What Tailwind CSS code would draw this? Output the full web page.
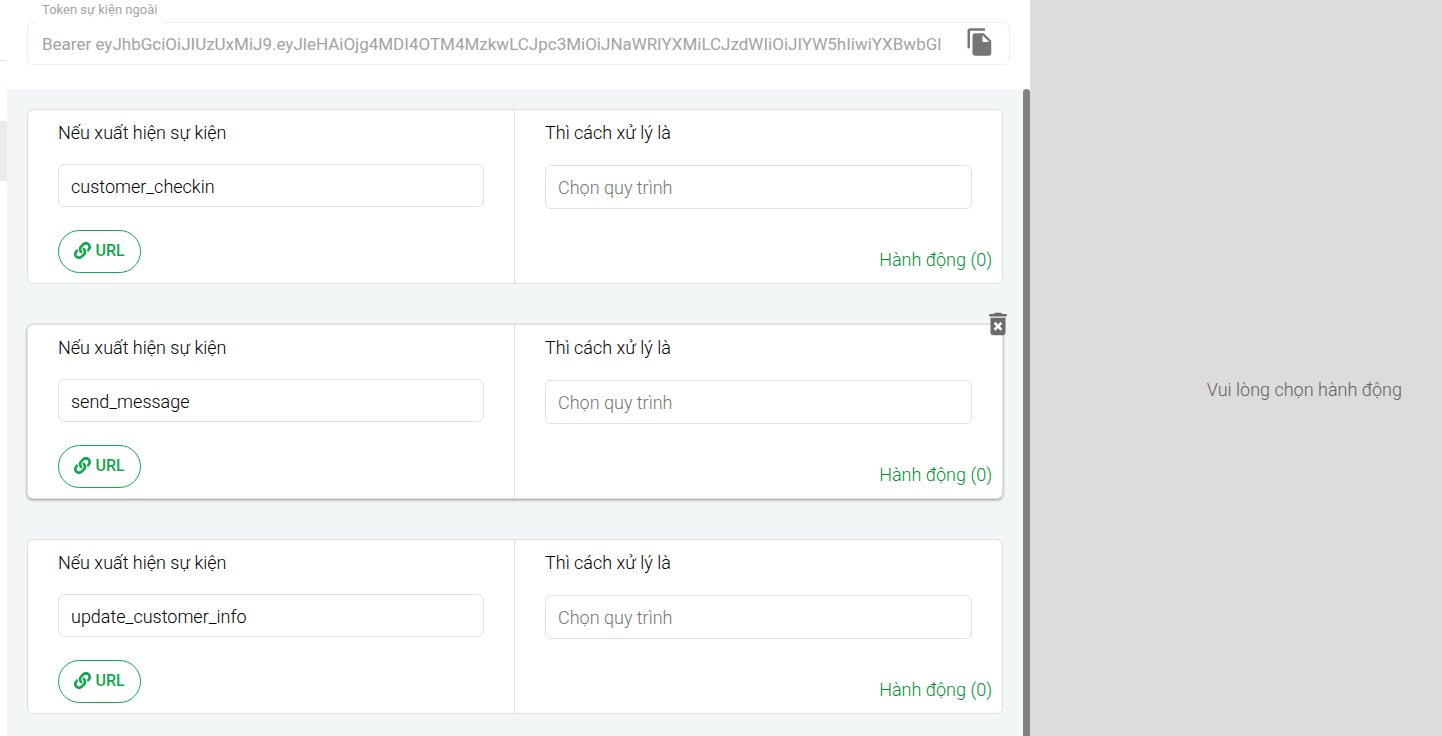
<!DOCTYPE html>
<html lang="vi">
<head>
    <meta charset="UTF-8">
    <meta name="viewport" content="width=device-width, initial-scale=1.0">
    <title>Sự kiện ngoài</title>
    <script src="https://cdn.jsdelivr.net/npm/@tailwindcss/browser@4"></script>
</head>
<body class="bg-white font-[Roboto,sans-serif] text-lg font-light text-black">

    <div class="flex h-screen overflow-hidden">

        <!-- Edge of the navigation -->
        <div class="w-[7px] shrink-0">
            <div class="h-[61px] border-b border-[#e0e0e0]"></div>
            <div class="mt-[60px] h-[60px] bg-[#e9eaec]"></div>
        </div>

        <!-- Main -->
        <main class="flex min-w-0 flex-1 flex-col">
            <div class="px-5 pt-[22px] pb-6">
                <div class="relative flex h-[43px] items-center rounded-md border border-[#eeeeee] pr-[14px] pl-[14px]">
                    <label for="token" class="absolute bottom-[38px] left-2 bg-white px-[6px] text-[13px] leading-8 font-normal text-[#a3a3a3]">Token sự kiện ngoài</label>
                    <input id="token" type="text" readonly class="min-w-0 flex-1 pt-[2px] text-[17px] font-normal text-[#a3a3a3] outline-none" value="Bearer eyJhbGciOiJIUzUxMiJ9.eyJleHAiOjg4MDI4OTM4MzkwLCJpc3MiOiJNaWRlYXMiLCJzdWIiOiJIYW5hIiwiYXBwbGl">
                    <button type="button" aria-label="Sao chép" class="mb-1">
                        <svg class="size-[30px]" viewBox="0 0 24 24" fill="#757575"><path d="M16 1H4c-1.100 0-2 .9-2 2v14h2V3h12V1zm-1 4l6 6v10c0 1.100-.9 2-2 2H7.990C6.890 23 6 22.100 6 21l.010-14c0-1.100.890-2 1.990-2h7zm-1 7h5.500L14 6.500V12z"/></svg>
                    </button>
                </div>
            </div>

            <div class="flex min-h-0 flex-1 bg-[#f3f6f7]">
                <div class="flex min-w-0 flex-1 flex-col gap-10 p-5">

                    <section class="grid h-[175px] shrink-0 grid-cols-2 rounded-md border border-[#e0e0e0] bg-white">
                        <div class="border-r border-[#e0e0e0] px-[30px] pt-[9px]">
                            <label for="event-1" class="block leading-7">Nếu xuất hiện sự kiện</label>
                            <input id="event-1" type="text" value="customer_checkin" class="mt-[17px] block h-[43px] w-full rounded-md border border-[#e0e0e0] px-3 pt-[2px] outline-none">
                            <button type="button" class="mt-[23px] flex h-[43px] w-[83px] items-center justify-center gap-1 rounded-full border border-[#0fa84b] pb-[2px] text-base font-medium text-[#0fa84b]">
                                <svg class="size-[17px]" viewBox="0 0 512 512" fill="currentColor"><path d="M326.612 185.391c59.747 59.809 58.927 155.698.36 214.590-.11.120-.240.250-.360.370l-67.200 67.200c-59.270 59.270-155.699 59.262-214.960 0-59.270-59.260-59.270-155.700 0-214.960l37.106-37.106c9.840-9.840 26.786-3.300 27.294 10.606.648 17.722 3.826 35.527 9.690 52.721 1.986 5.822.567 12.262-3.783 16.612l-13.087 13.087c-28.026 28.026-28.905 73.660-1.155 101.960 28.024 28.579 74.086 28.749 102.325.510l67.200-67.190c28.191-28.191 28.073-73.757 0-101.830-3.701-3.694-7.429-6.564-10.341-8.569a16.037 16.037 0 0 1-6.947-12.606c-.396-10.567 3.348-21.456 11.698-29.806l21.054-21.055c5.521-5.521 14.182-6.199 20.584-1.731a152.482 152.482 0 0 1 20.522 17.197zM467.547 44.449c-59.261-59.262-155.690-59.270-214.960 0l-67.200 67.200c-.120.120-.250.250-.360.370-58.566 58.892-59.387 154.781.360 214.590a152.454 152.454 0 0 0 20.521 17.196c6.402 4.468 15.064 3.789 20.584-1.731l21.054-21.055c8.350-8.350 12.094-19.239 11.698-29.806a16.037 16.037 0 0 0-6.947-12.606c-2.912-2.005-6.640-4.875-10.341-8.569-28.073-28.073-28.191-73.639 0-101.830l67.200-67.190c28.239-28.239 74.300-28.069 102.325.510 27.750 28.300 26.872 73.934-1.155 101.960l-13.087 13.087c-4.350 4.350-5.769 10.790-3.783 16.612 5.864 17.194 9.042 34.999 9.690 52.721.509 13.906 17.454 20.446 27.294 10.606l37.106-37.106c59.271-59.259 59.271-155.699.001-214.959z"/></svg>
                                URL
                            </button>
                        </div>
                        <div class="px-[30px] pt-[9px]">
                            <label for="flow-1" class="block leading-7">Thì cách xử lý là</label>
                            <input id="flow-1" type="text" placeholder="Chọn quy trình" class="mt-[18px] block h-11 w-full rounded-md border border-[#e0e0e0] px-3 pt-px outline-none placeholder:text-[#757575]">
                            <button type="button" class="-mr-5 mt-[37px] ml-auto block leading-7 text-[#008f35]">Hành động (0)</button>
                        </div>
                    </section>

                    <section class="relative grid h-[175px] shrink-0 grid-cols-2 rounded-md border border-[#e0e0e0] bg-white shadow-[0_1px_3px_#00000066]">
                        <button type="button" aria-label="Xóa" class="absolute -top-4 -right-[11px]">
                            <svg class="size-[30px]" viewBox="0 0 24 24" fill="#6b6b6b"><path d="M6 19c0 1.100.9 2 2 2h8c1.100 0 2-.9 2-2V7H6v12z"/><path d="M15.500 4l-1-1h-5l-1 1H5v2h14V4z"/><path d="M9.200 11l5.600 5.600M14.800 11l-5.600 5.600" stroke="#fff" stroke-width="2"/></svg>
                        </button>
                        <div class="border-r border-[#e0e0e0] px-[30px] pt-[9px]">
                            <label for="event-2" class="block leading-7">Nếu xuất hiện sự kiện</label>
                            <input id="event-2" type="text" value="send_message" class="mt-[17px] block h-[43px] w-full rounded-md border border-[#e0e0e0] px-3 pt-[2px] outline-none">
                            <button type="button" class="mt-[23px] flex h-[43px] w-[83px] items-center justify-center gap-1 rounded-full border border-[#0fa84b] pb-[2px] text-base font-medium text-[#0fa84b]">
                                <svg class="size-[17px]" viewBox="0 0 512 512" fill="currentColor"><path d="M326.612 185.391c59.747 59.809 58.927 155.698.36 214.590-.11.120-.240.250-.360.370l-67.200 67.200c-59.270 59.270-155.699 59.262-214.960 0-59.270-59.260-59.270-155.700 0-214.960l37.106-37.106c9.840-9.840 26.786-3.300 27.294 10.606.648 17.722 3.826 35.527 9.690 52.721 1.986 5.822.567 12.262-3.783 16.612l-13.087 13.087c-28.026 28.026-28.905 73.660-1.155 101.960 28.024 28.579 74.086 28.749 102.325.510l67.200-67.190c28.191-28.191 28.073-73.757 0-101.830-3.701-3.694-7.429-6.564-10.341-8.569a16.037 16.037 0 0 1-6.947-12.606c-.396-10.567 3.348-21.456 11.698-29.806l21.054-21.055c5.521-5.521 14.182-6.199 20.584-1.731a152.482 152.482 0 0 1 20.522 17.197zM467.547 44.449c-59.261-59.262-155.690-59.270-214.960 0l-67.200 67.200c-.120.120-.250.250-.360.370-58.566 58.892-59.387 154.781.360 214.590a152.454 152.454 0 0 0 20.521 17.196c6.402 4.468 15.064 3.789 20.584-1.731l21.054-21.055c8.350-8.350 12.094-19.239 11.698-29.806a16.037 16.037 0 0 0-6.947-12.606c-2.912-2.005-6.640-4.875-10.341-8.569-28.073-28.073-28.191-73.639 0-101.830l67.200-67.190c28.239-28.239 74.300-28.069 102.325.510 27.750 28.300 26.872 73.934-1.155 101.960l-13.087 13.087c-4.350 4.350-5.769 10.790-3.783 16.612 5.864 17.194 9.042 34.999 9.690 52.721.509 13.906 17.454 20.446 27.294 10.606l37.106-37.106c59.271-59.259 59.271-155.699.001-214.959z"/></svg>
                                URL
                            </button>
                        </div>
                        <div class="px-[30px] pt-[9px]">
                            <label for="flow-2" class="block leading-7">Thì cách xử lý là</label>
                            <input id="flow-2" type="text" placeholder="Chọn quy trình" class="mt-[18px] block h-11 w-full rounded-md border border-[#e0e0e0] px-3 pt-px outline-none placeholder:text-[#757575]">
                            <button type="button" class="-mr-5 mt-[37px] ml-auto block leading-7 text-[#008f35]">Hành động (0)</button>
                        </div>
                    </section>

                    <section class="grid h-[175px] shrink-0 grid-cols-2 rounded-md border border-[#e0e0e0] bg-white">
                        <div class="border-r border-[#e0e0e0] px-[30px] pt-[9px]">
                            <label for="event-3" class="block leading-7">Nếu xuất hiện sự kiện</label>
                            <input id="event-3" type="text" value="update_customer_info" class="mt-[17px] block h-[43px] w-full rounded-md border border-[#e0e0e0] px-3 pt-[2px] outline-none">
                            <button type="button" class="mt-[23px] flex h-[43px] w-[83px] items-center justify-center gap-1 rounded-full border border-[#0fa84b] pb-[2px] text-base font-medium text-[#0fa84b]">
                                <svg class="size-[17px]" viewBox="0 0 512 512" fill="currentColor"><path d="M326.612 185.391c59.747 59.809 58.927 155.698.36 214.590-.11.120-.240.250-.360.370l-67.200 67.200c-59.270 59.270-155.699 59.262-214.960 0-59.270-59.260-59.270-155.700 0-214.960l37.106-37.106c9.840-9.840 26.786-3.300 27.294 10.606.648 17.722 3.826 35.527 9.690 52.721 1.986 5.822.567 12.262-3.783 16.612l-13.087 13.087c-28.026 28.026-28.905 73.660-1.155 101.960 28.024 28.579 74.086 28.749 102.325.510l67.200-67.190c28.191-28.191 28.073-73.757 0-101.830-3.701-3.694-7.429-6.564-10.341-8.569a16.037 16.037 0 0 1-6.947-12.606c-.396-10.567 3.348-21.456 11.698-29.806l21.054-21.055c5.521-5.521 14.182-6.199 20.584-1.731a152.482 152.482 0 0 1 20.522 17.197zM467.547 44.449c-59.261-59.262-155.690-59.270-214.960 0l-67.200 67.200c-.120.120-.250.250-.360.370-58.566 58.892-59.387 154.781.360 214.590a152.454 152.454 0 0 0 20.521 17.196c6.402 4.468 15.064 3.789 20.584-1.731l21.054-21.055c8.350-8.350 12.094-19.239 11.698-29.806a16.037 16.037 0 0 0-6.947-12.606c-2.912-2.005-6.640-4.875-10.341-8.569-28.073-28.073-28.191-73.639 0-101.830l67.200-67.190c28.239-28.239 74.300-28.069 102.325.510 27.750 28.300 26.872 73.934-1.155 101.960l-13.087 13.087c-4.350 4.350-5.769 10.790-3.783 16.612 5.864 17.194 9.042 34.999 9.690 52.721.509 13.906 17.454 20.446 27.294 10.606l37.106-37.106c59.271-59.259 59.271-155.699.001-214.959z"/></svg>
                                URL
                            </button>
                        </div>
                        <div class="px-[30px] pt-[9px]">
                            <label for="flow-3" class="block leading-7">Thì cách xử lý là</label>
                            <input id="flow-3" type="text" placeholder="Chọn quy trình" class="mt-[18px] block h-11 w-full rounded-md border border-[#e0e0e0] px-3 pt-px outline-none placeholder:text-[#757575]">
                            <button type="button" class="-mr-5 mt-[37px] ml-auto block leading-7 text-[#008f35]">Hành động (0)</button>
                        </div>
                    </section>
                </div>

                <!-- Scrollbar -->
                <div class="w-[7px] rounded-t-full bg-[#828282]"></div>
            </div>
        </main>

        <!-- Action panel -->
        <aside class="flex w-[412px] shrink-0 items-center justify-end bg-[#dcdcdc] pt-11 pr-10 text-[#606060]">
            <p>Vui lòng chọn hành động</p>
        </aside>
    </div>

</body>
</html>
